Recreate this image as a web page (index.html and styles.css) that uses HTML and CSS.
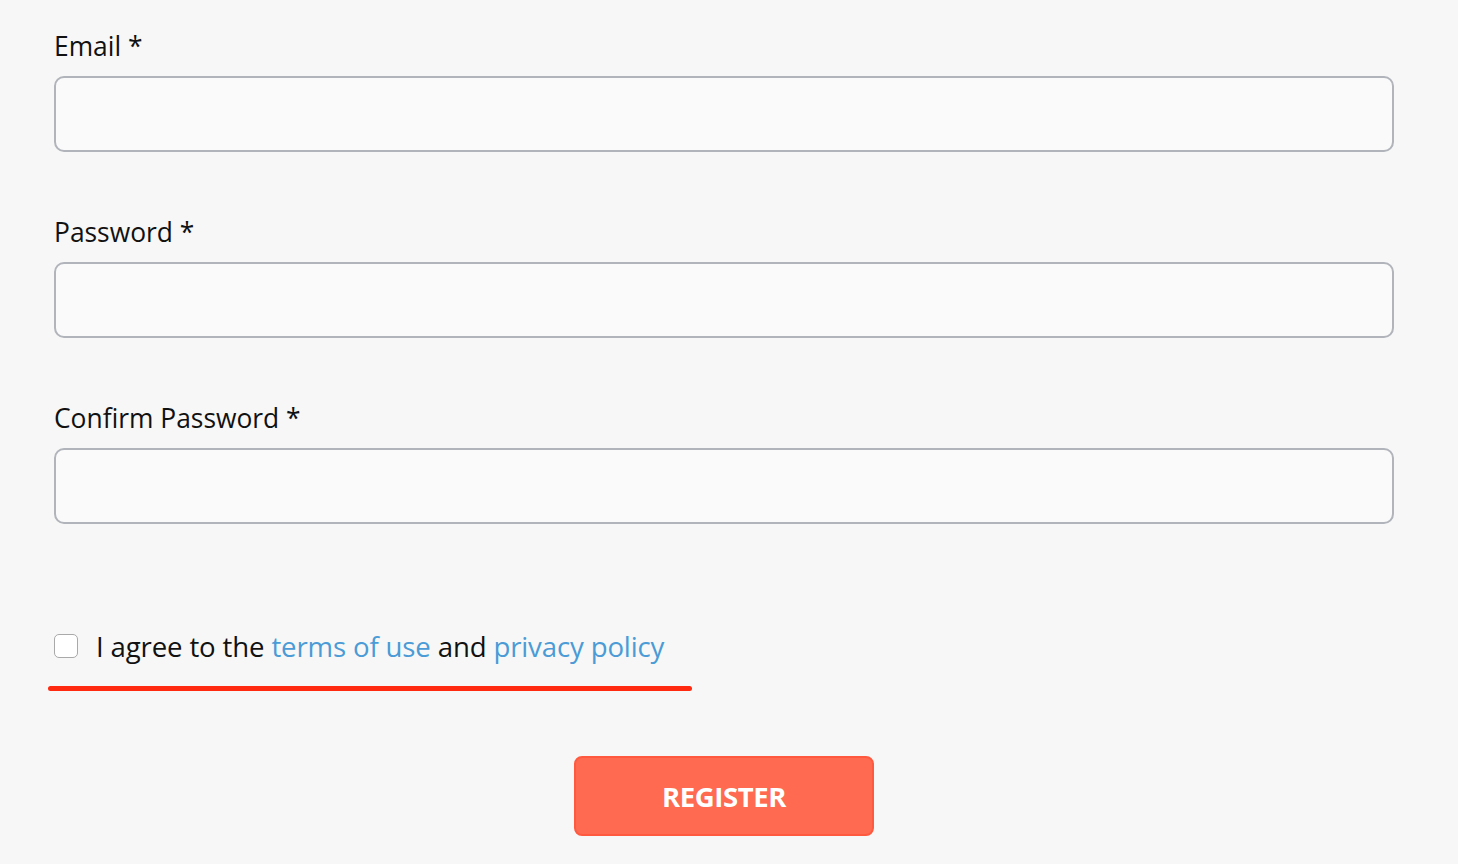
FILE: index.html
```html
<!DOCTYPE html>
<html>
<head>
<meta charset="utf-8">
<link rel="stylesheet" href="styles.css">
</head>
<body>
<form class="form">
  <div class="field">
    <label class="label">Email *</label>
    <input class="input" type="email">
  </div>
  <div class="field">
    <label class="label">Password *</label>
    <input class="input" type="password">
  </div>
  <div class="field field-last">
    <label class="label">Confirm Password *</label>
    <input class="input" type="password">
  </div>
  <div class="agree">
    <span class="check"></span>
    <span class="agree-text">I agree to the <a class="link">terms of use</a> and <a class="link">privacy policy</a></span>
  </div>
  <div class="mark"></div>
  <div class="actions">
    <button class="btn" type="button">REGISTER</button>
  </div>
</form>
</body>
</html>
```
FILE: styles.css
```css
html, body {
  margin: 0;
  padding: 0;
  background: #f7f7f7;
}
body {
  font-family: "Open Sans", "Noto Sans", sans-serif;
  color: #111;
}
.form {
  width: 1340px;
  margin-left: 54px;
  padding-top: 31px;
  display: flex;
  flex-direction: column;
}
.field {
  display: flex;
  flex-direction: column;
  margin-bottom: 65px;
}
.field-last {
  margin-bottom: 0;
}
.label {
  font-size: 26.4px;
  line-height: 30px;
  height: 30px;
  margin-bottom: 15px;
}
.input {
  box-sizing: border-box;
  width: 1340px;
  height: 76px;
  border: 2px solid #b1b4bb;
  border-radius: 10px;
  background: #fafafa;
  margin: 0;
}
.agree {
  margin-top: 107px;
  height: 30px;
  display: flex;
  align-items: center;
  gap: 18px;
}
.check {
  box-sizing: border-box;
  width: 24px;
  height: 24px;
  border: 1px solid #a9a9a9;
  border-radius: 5px;
  background: #fff;
}
.agree-text {
  font-size: 27.6px;
  line-height: 30px;
  letter-spacing: -0.15px;
}
.link {
  color: #4a9bd6;
}
.mark {
  margin-top: 25px;
  margin-left: -6px;
  width: 644px;
  height: 5px;
  border-radius: 3px;
  background: #ff2a0f;
}
.actions {
  display: flex;
  justify-content: center;
  margin-top: 65px;
  margin-left: -54px;
  width: 1448px;
}
.btn {
  width: 300px;
  height: 80px;
  background: #ff6a50;
  border: 2px solid #ff5a40;
  border-radius: 8px;
  color: #fff;
  font-family: "Open Sans", sans-serif;
  font-weight: 700;
  font-size: 27.5px;
  letter-spacing: -0.4px;
}
```
